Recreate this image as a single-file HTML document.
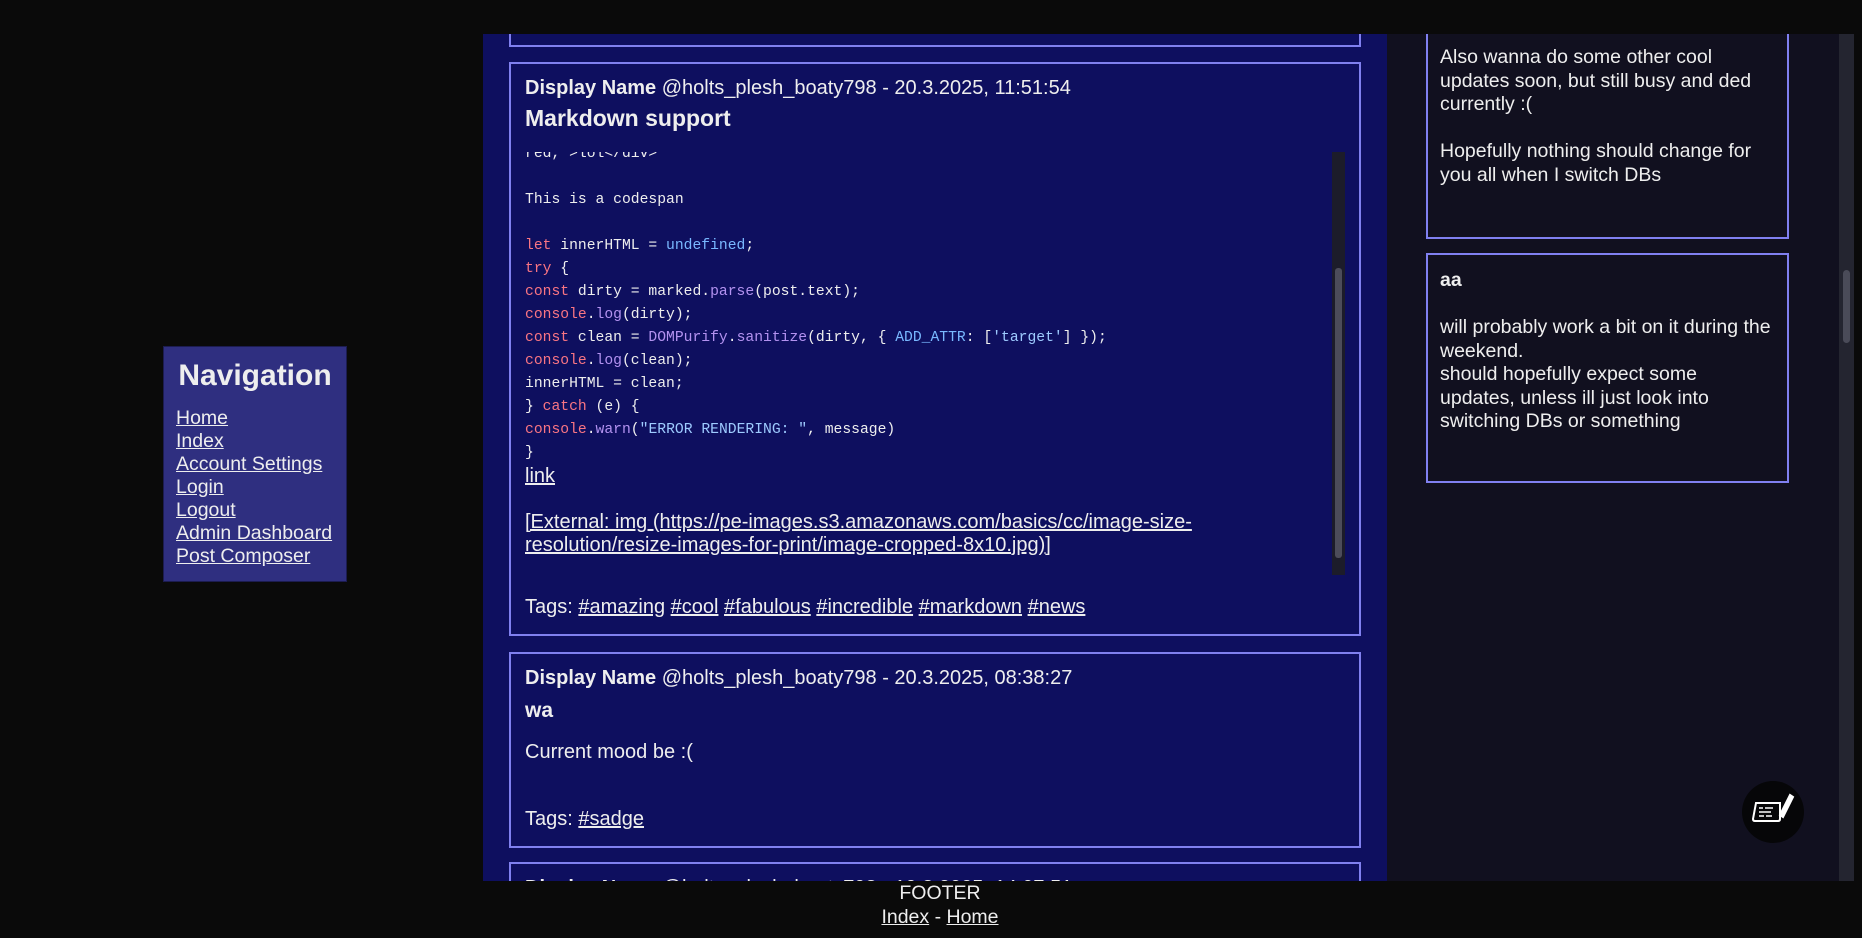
<!DOCTYPE html>
<html><head><meta charset="utf-8"><style>
*{box-sizing:border-box;margin:0;padding:0}
body{width:1862px;height:938px;background:#0a0a0a;font-family:"Liberation Sans",Arial,sans-serif;color:#eee;position:relative;overflow:hidden}
a{color:#eee;text-decoration:underline}
.main{position:absolute;left:483px;top:34px;width:904px;height:847px;background:#0e0f5f;overflow:hidden}
.side{position:absolute;left:1387px;top:34px;width:466px;height:847px;background:#11101f;overflow:hidden}
.sb{position:absolute;left:1839px;top:34px;width:15px;height:847px;background:#242530}
.sb .th{position:absolute;left:4px;top:236px;width:7px;height:73px;background:#4a4b58;border-radius:4px}
.card{position:absolute;left:26px;width:852px;border:2px solid #8080f0;padding:0 14px}
.hd{font-size:20px;margin-top:12px;line-height:24px}
.tt{font-size:23px;font-weight:bold;margin-top:5px}
.code{position:absolute;left:14px;top:88px;width:820px;height:423px;overflow:hidden;font-family:"Liberation Mono",monospace;font-size:14.7px;line-height:23px;white-space:pre}
.k{color:#f97583}.c{color:#79b8ff}.f{color:#b392f0}.s{color:#9ecbff}
.vs{position:absolute;right:14px;top:88px;width:13px;height:423px;background:#1c1c2a}
.vs .th{position:absolute;left:3px;top:116px;width:7px;height:290px;background:#4c4c5a;border-radius:3px}
.tags{font-size:20px}
.rc{position:absolute;left:39px;width:363px;border:2px solid #8080f0;padding:0 12px;font-size:19.5px;line-height:23.5px}
.nav{position:absolute;left:163px;top:346px;width:184px;height:236px;background:#2f2f80;border:1px solid #1c1c50;padding:10px 12px}
.nav h2{font-size:30px;text-align:center;margin-top:2px;margin-bottom:14px}
.nav a{display:block;font-size:19.5px;line-height:23px}
.foot{position:absolute;left:0;top:881px;width:1880px;text-align:center;font-size:19.5px;line-height:24px;padding-top:0}
.fab{position:absolute;left:1742px;top:781px;width:62px;height:62px;border-radius:50%;background:#060608}
</style></head><body>
<div class="main">
 <div class="card" style="top:-20px;height:33px"></div>
 <div class="card" style="top:28px;height:574px">
  <div class="hd"><b>Display Name</b> @holts_plesh_boaty798 - 20.3.2025, 11:51:54</div>
  <div class="tt">Markdown support</div>
  <div class="code"><div style="margin-top:-9px">red, &gt;lol&lt;/div&gt;

This is a codespan

<span class="k">let</span> innerHTML = <span class="c">undefined</span>;
<span class="k">try</span> {
<span class="k">const</span> dirty = marked.<span class="f">parse</span>(post.text);
<span class="k">console</span>.<span class="f">log</span>(dirty);
<span class="k">const</span> clean = <span class="f">DOMPurify</span>.<span class="f">sanitize</span>(dirty, { <span class="c">ADD_ATTR</span>: [<span class="s">'target'</span>] });
<span class="k">console</span>.<span class="f">log</span>(clean);
innerHTML = clean;
} <span class="k">catch</span> (e) {
<span class="k">console</span>.<span class="f">warn</span>(<span class="s">"ERROR RENDERING: "</span>, message)
}</div><div style="font-family:'Liberation Sans',sans-serif;font-size:20px;line-height:23px;white-space:normal"><a>link</a><br><br><a>[External: img (https://pe-images.s3.amazonaws.com/basics/cc/image-size-<br>resolution/resize-images-for-print/image-cropped-8x10.jpg)]</a></div></div>
  <div class="vs"><div class="th"></div></div>
  <div class="tags" style="position:absolute;left:14px;top:532px">Tags: <a>#amazing</a> <a>#cool</a> <a>#fabulous</a> <a>#incredible</a> <a>#markdown</a> <a>#news</a></div>
 </div>
 <div class="card" style="top:618px;height:196px">
  <div class="hd"><b>Display Name</b> @holts_plesh_boaty798 - 20.3.2025, 08:38:27</div>
  <div class="tt" style="font-size:21px;margin-top:9px">wa</div>
  <div style="font-size:20px;margin-top:18px">Current mood be :(</div>
  <div class="tags" style="margin-top:44px">Tags: <a>#sadge</a></div>
 </div>
 <div class="card" style="top:828px;height:100px">
  <div class="hd"><b>Display Name</b> @holts_plesh_boaty798 - 19.3.2025, 14:07:51</div>
 </div>
</div>
<div class="side">
 <div class="rc" style="top:-20px;height:225px;padding-top:30px">Also wanna do some other cool updates soon, but still busy and ded currently :(<br><br>Hopefully nothing should change for you all when I switch DBs</div>
 <div class="rc" style="top:219px;height:230px;padding-top:14px"><b>aa</b><br><br>will probably work a bit on it during the weekend.<br>should hopefully expect some updates, unless ill just look into switching DBs or something</div>
</div>
<div class="sb"><div class="th"></div></div>
<div class="nav"><h2>Navigation</h2><a>Home</a><a>Index</a><a>Account Settings</a><a>Login</a><a>Logout</a><a>Admin Dashboard</a><a>Post Composer</a></div>
<div class="fab"><svg width="62" height="62" viewBox="0 0 62 62" fill="none" stroke="#fff" stroke-width="2"><path d="M14 22 L38 22 L38 38 Q38 40 36 40 L13 40 Q11 40 11 38 Z"/><path d="M17 27h4M23 27h8M17 31h12M17 35h5M24 35h6" stroke-width="1.5"/><path d="M38 34 L48 14 L51 16 L41 36 Z" fill="#fff"/></svg></div>
<div class="foot">FOOTER<br><a>Index</a> - <a>Home</a></div>
</body></html>
